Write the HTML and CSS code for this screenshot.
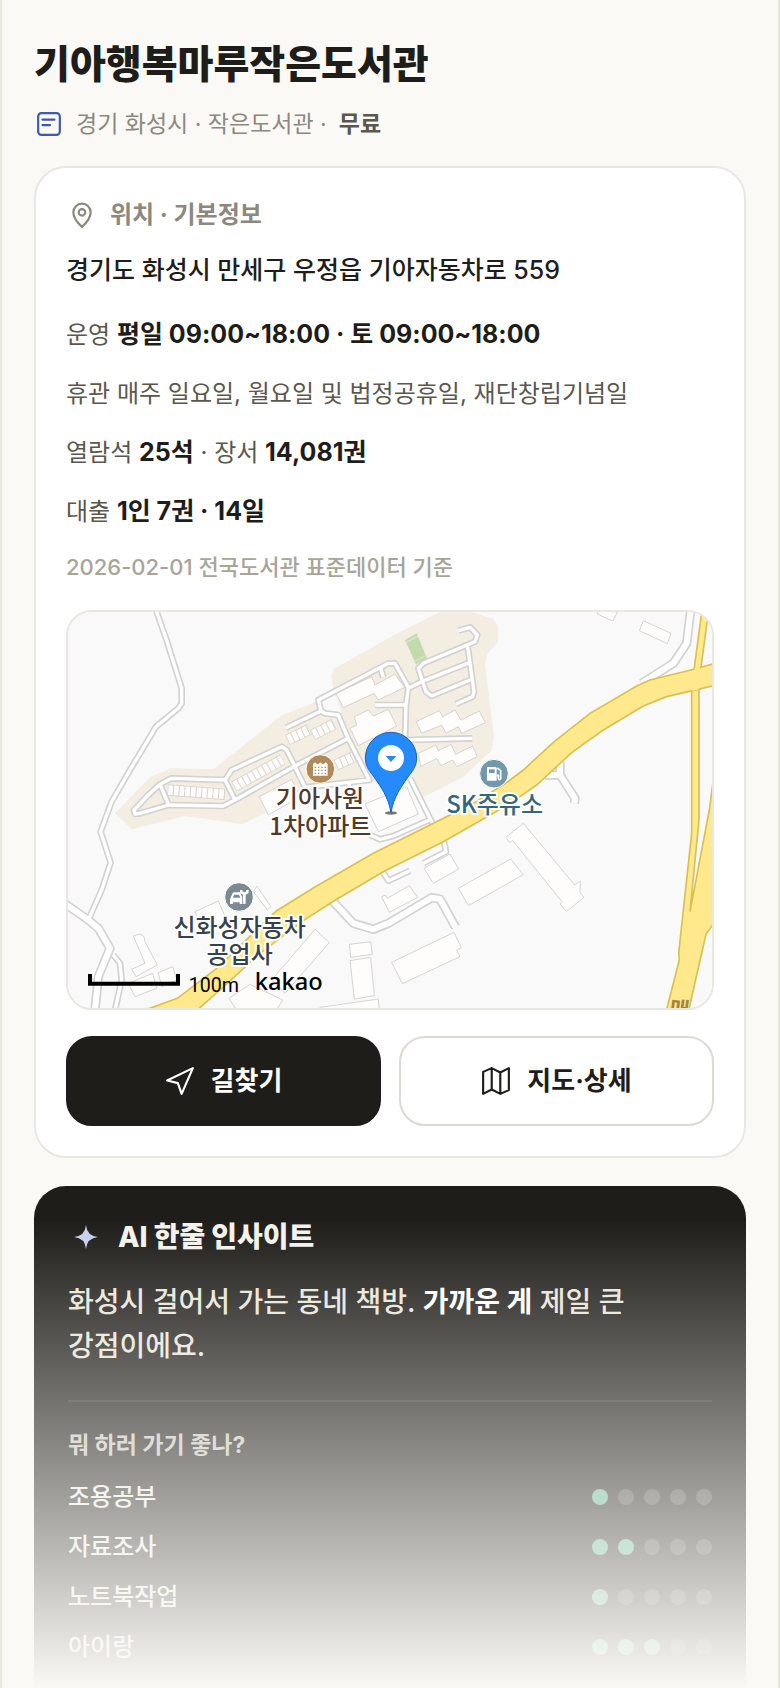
FILE: index.html
```html
<!DOCTYPE html>
<html lang="ko">
<head>
  <meta charset="UTF-8">
  <meta name="viewport" content="width=device-width, initial-scale=1">
  <title>기아행복마루작은도서관</title>
  <link rel="stylesheet" href="styles.css">
</head>
<body>
  <main class="page">
    <header class="head">
      <h1>기아행복마루작은도서관</h1>
      <p class="meta">
        <svg class="icon" viewBox="0 0 24 24" aria-hidden="true"><rect x="2" y="2" width="20" height="20" rx="3"/><path d="M6 8h11M6 13h7"/></svg>
        <span>경기 화성시 · 작은도서관 ·</span>
        <strong>무료</strong>
      </p>
    </header>

    <section class="card">
      <h2 class="card-title">
        <svg class="icon" viewBox="0 0 24 24" aria-hidden="true"><path d="M12 23C7 18.500 4 14.500 4 9.500a8 8 0 0 1 16 0C20 14.500 17 18.500 12 23z"/><circle cx="12" cy="9.500" r="3"/></svg>
        위치 · 기본정보
      </h2>
      <p class="address">경기도 화성시 만세구 우정읍 기아자동차로 559</p>
      <div class="facts">
        <p>운영 <b>평일 09:00~18:00 · 토 09:00~18:00</b></p>
        <p>휴관 매주 일요일, 월요일 및 법정공휴일, 재단창립기념일</p>
        <p>열람석 <b>25석</b> · 장서 <b>14,081권</b></p>
        <p>대출 <b>1인 7권 · 14일</b></p>
      </div>
      <p class="source">2026-02-01 전국도서관 표준데이터 기준</p>

      <div class="map">
        <svg viewBox="24 36 1932 1188" role="img" aria-label="지도">
          <defs>
            <g id="streets">
              <path d="M288 30 318 115 365 265V310L355 325 288 380 210 510 155 605 122 695 152 788 125 870 85 960"/>
              <path d="M160 1065 180 1090 185 1140 165 1230"/>
              <path d="M678 383 783 333 775 300 985 190 1005 190 1045 262 1038 315 1035 418"/>
              <path d="M783 333 795 340 835 345 862 410 928 540 735 562 705 500 680 450 665 440 515 510 495 540 335 535 300 553 265 585 222 630 225 642 240 640 325 615 490 618 525 600 705 498 865 415"/>
              <path d="M300 553 325 612M495 540 525 600M962 205 970 232M945 315H1035M868 552V575"/>
              <path d="M1045 265 1085 245 1228 188M1195 92 1230 82 1252 105 1245 125 1090 190 1075 205 1098 275 1115 288 1235 238"/>
              <path d="M1223 140 1242 275 1238 290 1188 312M1035 420 1237 415"/>
              <path d="M1050 535 1115 665 1152 725 1158 755 1090 790"/>
              <path d="M930 705 960 718 1000 708 1108 660M968 815 985 842 1050 812"/>
            </g>
            <g id="lanes">
              <path d="M10 908 85 960 115 985 150 1045 115 1130 105 1230"/>
              <path d="M815 900 880 970 940 988 985 970 1115 893 1140 897 1187 982"/>
              <path d="M1455 525 1500 525 1545 595 1543 610M1500 525V485"/>
              <path d="M1892 30 1880 130 1840 190 1745 250"/>
            </g>
          </defs>
          <rect class="ground" x="18" y="30" width="1944" height="1200"/>
          <path class="district" d="M1140 36H1235L1302 58 1314 80 1315 125 1282 162 1275 195 1302 410 1295 455 1210 530 1090 592 1050 540 940 545 735 570 720 590 620 635 548 672 375 648 215 688 165 640 272 530 335 505 460 508 665 346 768 306 820 262 814 230 822 206 1020 95Z"/>
          <path class="ground" d="M785 305 828 282 848 350 795 332ZM1310 437 1390 490 1330 560 1220 580 1205 535Z"/>
          <path class="pitch" d="M1035 120 1070 100 1102 178 1068 193Z"/>
          <path class="pitch-line" d="M1039 127 1074 108M1062 184 1096 168"/>

          <g class="building">
            <path d="M828 280 935 230 945 255 1005 222 1034 262 955 300 942 280 850 323Z"/>
            <path d="M870 385 890 375 883 350 925 330 940 348 985 328 1010 378 895 437Z"/>
            <path d="M598 590 695 538 720 590 625 645Z"/>
            <path d="M1068 365 1138 332 1148 350 1185 330 1203 360 1258 333 1276 368 1205 400 1195 380 1158 400 1145 375 1085 400Z"/>
            <path d="M1075 460 1128 435 1135 452 1173 433 1187 463 1238 438 1252 470 1190 500 1178 480 1143 497 1130 475 1082 500Z"/>
            <path d="M915 612 1040 560 1075 642 955 695Z"/>
            <path d="M1612 30 1612 42 1658 63 1673 36ZM1750 62 1833 100 1822 131 1738 92Z"/>
            <path d="M1390 670 1338 712 1348 727 1358 722 1506 905 1500 912 1520 934 1572 892 1560 878 1561 843 1544 855Z"/>
            <path d="M1195 865 1352 777 1390 824 1225 917ZM1092 805 1170 762 1196 807 1120 850Z"/>
            <path d="M965 890 975 885 982 895 1048 857 1073 892 988 937Z"/>
            <path d="M995 1087 1182 997 1204 1043 1190 1050 1200 1070 1027 1151Z"/>
            <path d="M590 858 633 920 622 930 580 875ZM405 935 475 903 500 960 430 1000Z"/>
            <path d="M765 988 808 1028 675 1180 635 1140ZM868 1033 932 1025 937 1063 872 1072Z"/>
            <path d="M870 1082 932 1072 943 1187 883 1197ZM780 1222 955 1197 958 1230 780 1230Z"/>
            <path d="M570 1153 668 1200 650 1230 530 1230 507 1195Z"/>
            <path d="M220 1008 240 1002 252 1010 255 1025 292 1095 228 1130 215 1108 255 1090Z"/>
            <path d="M205 1150 278 1120 290 1165 225 1190ZM295 1118 338 1100 350 1140 305 1160Z"/>
          </g>
          <g class="units-edge">
            <path d="M682 420 748 388M758 405 822 372M828 495 882 470M522 560 668 478M323 570 495 583"/>
          </g>
          <g class="units">
            <path d="M684 419 747 389M760 404 821 373M830 494 881 471M524 559 667 479M325 570 494 583"/>
          </g>

          <use class="street-edge" href="#streets"/>
          <use class="lane-edge" href="#lanes"/>
          <use class="street" href="#streets"/>
          <use class="lane" href="#lanes"/>

          <path class="highway" d="M1926 30 1902 210H1922L1946 30Z"/>
          <path class="highway" d="M1895 260V700L1856 1060 1858 1080 1818 1236H1886L1893 1200 1938 1003 1965 965V500L1948 630 1890 935 1917 660V260Z"/>
          <path class="highway" d="M255 1230 352 1195 470 1105 650 932 770 858 940 760 1110 675 1240 610 1340 548 1390 510 1480 427 1590 340 1730 258 1770 240 1905 207 1965 190V256L1820 290 1750 318 1630 390 1535 458 1430 555 1380 590 1300 640 1150 725 975 812 830 898 730 962 600 1060 480 1170 405 1236Z"/>
          <path class="joint" d="M1904 208 1920 203M1896 268 1916 264"/>
          <text class="road-name" x="1826" y="1246" transform="rotate(8 1826 1246)">매</text>

          <circle class="badge apartment" cx="781" cy="507" r="43"/>
          <path class="badge-icon" d="M759 527V492L765 487 771 492H775L781 487 787 492H791L797 487 803 492V527Z"/>
          <path class="windows" d="M764 502H800M764 511H800M764 520H800"/>
          <circle class="badge fuel" cx="1302" cy="521" r="43"/>
          <path class="badge-icon" d="M1285 501H1306Q1310 501 1310 505V542H1281V505Q1281 501 1285 501Z"/>
          <path class="fuel-window" d="M1287 508H1304V519H1287Z"/>
          <path class="hose" d="M1312 504 1322 512V536Q1318 542 1315 536V526H1310"/>
          <circle class="badge garage" cx="537" cy="891" r="43"/>
          <path class="badge-icon" d="M510 912V898L517 881Q519 877 524 877H540L547 892V912H539V907H519V912Z"/>
          <path class="car-window" d="M518 893 523 884H537L541 893Z"/>
          <path class="wrench" d="M544 870V877L553 882 562 877V870M553 882V911"/>

          <g class="labels">
            <text class="brown" x="780" y="620">기아사원</text>
            <text class="brown" x="781" y="706">1차아파트</text>
            <text class="teal" x="1304" y="638">SK주유소</text>
            <text class="slate" x="539" y="1009">신화성자동차</text>
            <text class="slate" x="539" y="1089">공업사</text>
          </g>

          <ellipse class="pin-shadow" cx="993" cy="639" rx="18" ry="5"/>
          <path class="pin" d="M993 638C985 590 962 560 940 528 925 510 916 495 916 474A77 77 0 0 1 1070 474C1070 495 1061 510 1046 528 1024 560 1001 590 993 638Z"/>
          <circle class="pin-hole" cx="993" cy="474" r="39"/>
          <path class="pin-mark" d="M977 468H1009L993 486Z"/>

          <path class="scale" d="M90 1122V1151H354V1122"/>
          <text class="scale-text" x="386" y="1175">100m</text>
          <text class="brand" x="584" y="1169">kakao</text>
        </svg>
      </div>

      <div class="actions">
        <button type="button" class="btn primary">
          <svg class="icon-lg" viewBox="0 0 28 28" aria-hidden="true"><path d="M26 2 2 13.500 12 16 15.500 26Z"/></svg>
          길찾기
        </button>
        <button type="button" class="btn">
          <svg class="icon-lg" viewBox="0 0 28 28" aria-hidden="true"><path d="M2 5.500 10 2l8 4 8-4v20.500L18 26l-8-4-8 4ZM10 2v20M18 6v20"/></svg>
          지도·상세
        </button>
      </div>
    </section>

    <section class="insight">
      <h2>
        <svg class="spark" viewBox="0 0 24 24" aria-hidden="true"><path d="M12 0Q13 11 24 12 13 13 12 24 11 13 0 12 11 11 12 0Z"/></svg>
        AI 한줄 인사이트
      </h2>
      <p class="comment">화성시 걸어서 가는 동네 책방. <b>가까운 게</b> 제일 큰 강점이에요.</p>
      <h3>뭐 하러 가기 좋나?</h3>
      <ul class="scores">
        <li>조용공부 <span class="dots"><i class="on"></i><i></i><i></i><i></i><i></i></span></li>
        <li>자료조사 <span class="dots"><i class="on"></i><i class="on"></i><i></i><i></i><i></i></span></li>
        <li>노트북작업 <span class="dots"><i class="on"></i><i></i><i></i><i></i><i></i></span></li>
        <li>아이랑 <span class="dots"><i class="on"></i><i class="on"></i><i class="on"></i><i></i><i></i></span></li>
      </ul>
    </section>
    <div class="fade"></div>
  </main>
</body>
</html>
```

FILE: styles.css
```css
* { box-sizing: border-box; }
body {
  margin: 0;
  background: #faf9f5;
  color: #1e1d19;
  font-family: Inter, "Noto Sans CJK KR", sans-serif;
  font-size: 24px;
  font-weight: 500;
  word-break: keep-all;
}
h1, h2, h3, p, ul { margin: 0; padding: 0; }
.page {
  position: relative;
  display: flex;
  flex-direction: column;
  min-height: 100vh;
  padding: 40px 32px 0;
  border: solid #e9e7e0;
  border-width: 0 2px;
}

/* header */
.head { margin-bottom: 24px; }
h1 { font-size: 39px; line-height: 48px; font-weight: 800; }
.meta {
  display: flex;
  align-items: center;
  gap: 12px;
  margin-top: 18px;
  padding-left: 2px;
  color: #8c887c;
  font-size: 23px;
  font-weight: 400;
  line-height: 36px;
}
.meta span { margin-left: 2px; }
.meta strong { color: #5a574e; font-weight: 700; }
.icon, .icon-lg {
  width: 26px;
  height: 26px;
  flex: none;
  fill: none;
  stroke: currentColor;
  stroke-width: 2;
  stroke-linecap: round;
  stroke-linejoin: round;
}
.icon-lg { width: 30px; height: 30px; }
.meta .icon { color: #3f5aa6; }

/* info card */
.card {
  padding: 30px;
  border: 2px solid #e9e7e0;
  border-radius: 32px;
  background: #fff;
}
.card-title {
  display: flex;
  align-items: center;
  gap: 15px;
  padding-left: 3px;
  color: #8c887c;
  font-size: 24px;
  line-height: 34px;
  font-weight: 700;
}
.address { margin-top: 18px; font-size: 25px; line-height: 40px; }
.facts {
  display: flex;
  flex-direction: column;
  gap: 19px;
  margin-top: 25px;
  color: #5a574e;
  font-weight: 400;
  line-height: 40px;
}
.facts b { color: #1e1d19; font-size: 25px; line-height: 1; }
.source {
  margin-top: 18px;
  color: #a8a498;
  font-size: 22px;
  line-height: 34px;
}

/* map */
.map {
  margin: 26px 0;
  overflow: hidden;
  border: 2px solid #e9e7e0;
  border-radius: 26px;
}
.map svg { display: block; width: 100%; height: auto; }
.ground { fill: #f9f9f9; }
.district { fill: #f4ede1; }
.pitch { fill: #c2dbad; }
.pitch-line { stroke: #d8e8ca; stroke-width: 4; }
.building { fill: #fefdfc; stroke: #d4d4d4; stroke-width: 3; }
.units-edge { fill: none; stroke: #d8d4cd; stroke-width: 34; }
.units { fill: none; stroke: #fefdfc; stroke-width: 29; stroke-dasharray: 14 3; }
.street-edge, .lane-edge, .street, .lane { fill: none; stroke-linejoin: round; }
.street-edge { stroke: #d2d2d2; stroke-width: 20; }
.street { stroke: #fff; stroke-width: 10; }
.lane-edge { stroke: #d2d2d2; stroke-width: 28; }
.lane { stroke: #fff; stroke-width: 18; }
.highway { fill: #ffe98c; stroke: #d8c152; stroke-width: 5; }
.joint { stroke: #ffe98c; stroke-width: 8; }
.road-name { fill: #a58440; font-size: 64px; font-weight: 700; }
.badge { stroke: #fff; stroke-width: 3; }
.apartment { fill: #b08b59; }
.fuel { fill: #7299ab; }
.garage { fill: #7b8990; }
.badge-icon { fill: #fff; }
.windows { fill: none; stroke: #b08b59; stroke-width: 4; stroke-dasharray: 4 6; }
.fuel-window { fill: #7299ab; }
.hose { fill: none; stroke: #fff; stroke-width: 5; }
.car-window { fill: #7b8990; }
.wrench { fill: none; stroke: #fff; stroke-width: 8; }
.labels {
  font-family: "Noto Sans CJK KR", sans-serif;
  font-size: 72px;
  font-weight: 500;
  text-anchor: middle;
  stroke: #fff;
  stroke-width: 12;
  stroke-linejoin: round;
  paint-order: stroke;
}
.brown { fill: #523a2b; }
.teal { fill: #33667f; }
.slate { fill: #35424b; }
.pin { fill: #258bfb; stroke: #1a62bd; stroke-width: 3; }
.pin-hole { fill: #fff; }
.pin-mark { fill: #258bfb; }
.pin-shadow { fill: #777; }
.scale { fill: none; stroke: #000; stroke-width: 12; }
.scale-text { font-family: Roboto, sans-serif; font-size: 59px; font-weight: 400; }
.brand { font-family: "Noto Sans", sans-serif; font-size: 71px; font-weight: 500; }

/* buttons */
.actions { display: grid; grid-template-columns: 1fr 1fr; gap: 18px; }
.btn {
  display: flex;
  align-items: center;
  justify-content: center;
  gap: 16px;
  height: 90px;
  border: 2px solid #dcdad1;
  border-radius: 26px;
  background: #fff;
  color: #1e1d19;
  font: inherit;
  font-size: 26px;
  font-weight: 700;
  line-height: 40px;
}
.btn.primary { border-color: #1e1d19; background: #1e1d19; color: #fff; }

/* insight */
.insight {
  flex: 1;
  margin-top: 28px;
  padding: 32px 34px 24px;
  border-radius: 32px 32px 0 0;
  background: #1e1d19;
  color: #f4f2ec;
}
.insight h2 {
  display: flex;
  align-items: center;
  gap: 20px;
  padding-left: 6px;
  font-size: 28px;
  line-height: 38px;
  font-weight: 800;
}
.spark { width: 24px; height: 24px; fill: #c5d0f0; }
.comment {
  padding: 24px 0 32px;
  border-bottom: 2px solid #34332f;
  color: #e8e5dc;
  font-size: 28px;
  line-height: 44px;
}
.comment b { color: #fff; }
.insight h3 {
  margin-top: 25px;
  color: #c9c5ba;
  font-size: 23px;
  line-height: 36px;
  font-weight: 700;
}
.scores {
  display: flex;
  flex-direction: column;
  gap: 14px;
  margin-top: 16px;
  list-style: none;
  color: #f0eee6;
  line-height: 36px;
}
.scores li { display: flex; align-items: center; justify-content: space-between; }
.dots { display: flex; gap: 10px; }
.dots i { width: 16px; height: 16px; border-radius: 50%; background: #464541; }
.dots .on { background: #5fb493; }
.fade {
  position: absolute;
  right: 0;
  bottom: 0;
  left: 0;
  height: 470px;
  background: linear-gradient(rgba(250, 249, 245, 0), #faf9f5);
  pointer-events: none;
}
```
